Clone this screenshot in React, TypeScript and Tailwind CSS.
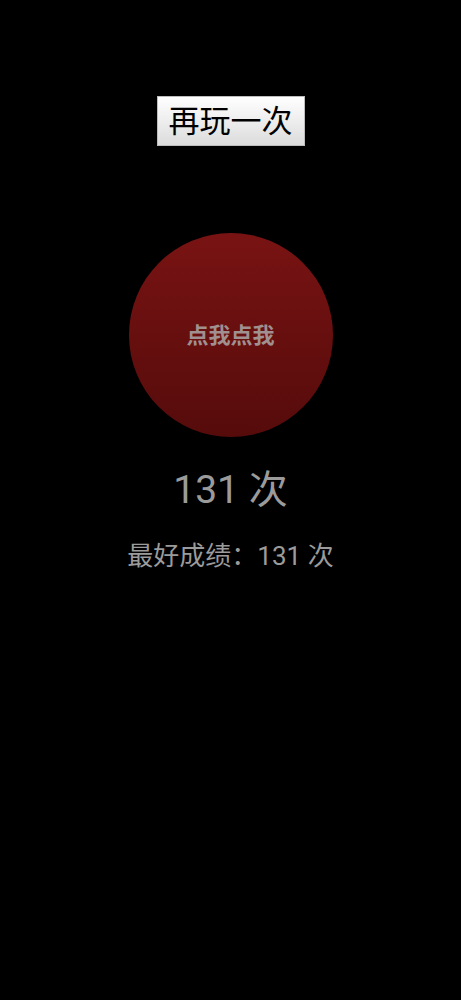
export default function App() {
  return (
    <div
      className="min-h-[1000px] w-full bg-black flex flex-col items-center"
      style={{ fontFamily: '"Roboto", "Noto Sans CJK SC", sans-serif' }}
    >
      <button className="mt-[96px] h-[50px] w-[148px] bg-gradient-to-b from-[#ffffff] to-[#dcdcdc] border border-[#bdbdbd] text-[31px] leading-none text-black flex items-center justify-center">
        再玩一次
      </button>

      <div className="mt-[87px] h-[204px] w-[204px] rounded-full bg-gradient-to-b from-[#791313] to-[#560b0b] flex items-center justify-center">
        <span className="text-[22px] font-bold text-[#a09090]">点我点我</span>
      </div>

      <div className="mt-[27px] text-[39px] leading-[52px] text-[#9b9b9b]">131 次</div>
      <div className="mt-[23px] text-[26px] leading-[34px] text-[#9b9b9b]">最好成绩：131 次</div>
    </div>
  );
}
